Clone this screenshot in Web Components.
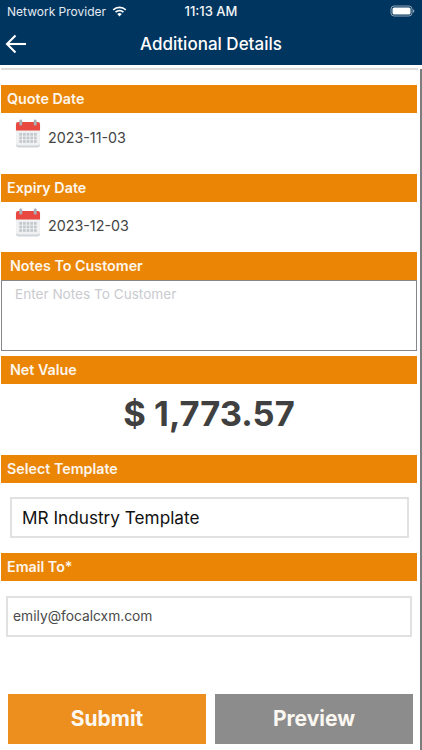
<!DOCTYPE html>
<html>
<head>
<meta charset="utf-8">
<style>
  html,body{margin:0;padding:0;background:#fff;}
  body{width:422px;height:750px;overflow:hidden;font-family:Inter,"Liberation Sans",sans-serif;position:relative;}
</style>
</head>
<body>
<details-page></details-page>

<script>
const calendarIcon = `
  <svg width="26" height="29" viewBox="0 0 27 30">
    <rect x="1" y="3" width="25" height="26.500" rx="2.500" fill="#cfd4d9"/>
    <rect x="1" y="3" width="25" height="24.500" rx="2.500" fill="#f0f1f3"/>
    <path d="M1 12V5.500A2.500 2.500 0 0 1 3.500 3h20A2.500 2.500 0 0 1 26 5.500V12z" fill="#e8483f"/>
    <rect x="4.500" y="0.500" width="3" height="6.500" rx="1.500" fill="#a9afb5"/>
    <rect x="19.500" y="0.500" width="3" height="6.500" rx="1.500" fill="#a9afb5"/>
    <g fill="#c3c8cd">
      ${[14.5,18.2,21.9].map(y => [4.5,8.3,12.1,15.9,19.7].map(x => `<rect x="${x}" y="${y}" width="2.800" height="2.800"/>`).join('')).join('')}
    </g>
  </svg>`;

class StatusBar extends HTMLElement {
  constructor() {
    super();
    this.attachShadow({ mode: 'open' }).innerHTML = `
      <style>
        :host{display:grid;grid-template-columns:1fr auto 1fr;align-items:center;height:22px;padding:0 7px;color:#e4ebf1;font-size:12px;}
        .left{display:flex;align-items:center;gap:6px;}
        .time{color:#f4f6f8;font-size:13px;font-weight:500;}
        .right{display:flex;justify-content:flex-end;}
        svg{display:block;}
      </style>
      <div class="left">
        <span>Network Provider</span>
        <svg width="15" height="11" viewBox="0 0 15 11" fill="#fff">
          <path d="M7.500 2.200c2.200 0 4.200.8 5.700 2.300l1.100-1.200A9.800 9.800 0 0 0 7.500.500 9.800 9.800 0 0 0 .7 3.300l1.100 1.200a8.100 8.100 0 0 1 5.700-2.300z"/>
          <path d="M7.500 5.400c1.300 0 2.500.5 3.400 1.300l1.100-1.200a6.600 6.600 0 0 0-9 0l1.100 1.200c.9-.8 2.100-1.300 3.400-1.300z"/>
          <path d="M7.500 10.500l2.300-2.500a3.300 3.300 0 0 0-4.600 0z"/>
        </svg>
      </div>
      <span class="time">11:13 AM</span>
      <div class="right">
        <svg width="25" height="12" viewBox="0 0 25 12">
          <rect x="1" y="1" width="21" height="10" rx="3" fill="none" stroke="#8fa3b5" stroke-width="1"/>
          <rect x="2.500" y="2.500" width="18" height="7" rx="1.500" fill="#fff"/>
          <rect x="23" y="4.500" width="1.200" height="3" rx=".6" fill="#8fa3b5"/>
        </svg>
      </div>`;
  }
}
customElements.define('status-bar', StatusBar);

class NavBar extends HTMLElement {
  constructor() {
    super();
    this.attachShadow({ mode: 'open' }).innerHTML = `
      <style>
        :host{display:block;background:#00355f;height:65px;box-sizing:border-box;}
        .row{display:grid;grid-template-columns:60px 1fr 60px;align-items:center;height:43px;}
        .title{text-align:center;color:#fff;font-size:17px;font-weight:500;}
        svg{display:block;margin-left:5px;}
      </style>
      <status-bar></status-bar>
      <div class="row">
        <svg width="22" height="20" viewBox="0 0 22 20" fill="none" stroke="#fff" stroke-width="2.100">
          <path d="M21 10H2"/>
          <path d="M10.500 1.500L2 10l8.500 8.500"/>
        </svg>
        <div class="title"><slot></slot></div>
        <span></span>
      </div>`;
  }
}
customElements.define('nav-bar', NavBar);

class SectionBar extends HTMLElement {
  constructor() {
    super();
    this.attachShadow({ mode: 'open' }).innerHTML = `
      <style>
        :host{display:flex;align-items:center;box-sizing:border-box;height:28px;width:416px;margin-left:1px;padding-left:var(--bar-pad,6px);background:#ea8505;color:#fdf6ec;font-size:14.300px;font-weight:600;}
      </style>
      <slot></slot>`;
  }
}
customElements.define('section-bar', SectionBar);

class DateRow extends HTMLElement {
  constructor() {
    super();
    this.attachShadow({ mode: 'open' }).innerHTML = `
      <style>
        :host{display:flex;align-items:flex-start;gap:7px;box-sizing:border-box;padding:6px 0 0 15px;height:46px;color:#444;font-size:14.300px;}
        svg{display:block;flex:none;}
        span{margin-top:var(--text-drop,10px);}
      </style>
      ${calendarIcon}
      <span><slot></slot></span>`;
  }
}
customElements.define('date-row', DateRow);

class TextBox extends HTMLElement {
  constructor() {
    super();
    this.attachShadow({ mode: 'open' }).innerHTML = `
      <style>
        :host{display:flex;align-items:center;box-sizing:border-box;height:41px;background:#fff;border:2px solid #e0e1e3;}
      </style>
      <slot></slot>`;
  }
}
customElements.define('text-box', TextBox);

class ActionButton extends HTMLElement {
  constructor() {
    super();
    this.attachShadow({ mode: 'open' }).innerHTML = `
      <style>
        :host{display:flex;align-items:center;justify-content:center;height:50px;background:var(--btn-bg,#ec8f1f);color:#fbf7f1;font-size:21px;font-weight:700;}
      </style>
      <slot></slot>`;
  }
}
customElements.define('action-button', ActionButton);

class DetailsPage extends HTMLElement {
  constructor() {
    super();
    this.attachShadow({ mode: 'open' }).innerHTML = `
      <style>
        :host{display:block;position:relative;width:422px;height:750px;overflow:hidden;}
        .rule{height:1.500px;background:#dcdee0;margin:3px 4px 0 1px;}
        .scrollbar{position:absolute;right:0;top:69px;bottom:0;width:2px;background:#7d7d7d;}
        .first{margin-top:15px;}
        .notes{box-sizing:border-box;width:416px;height:71px;margin-left:1px;background:#fff;border:1px solid #85878a;border-top-width:1.500px;padding:5px 13px;color:#c9cbcf;font-size:13.600px;}
        .value{height:71px;display:flex;align-items:center;justify-content:center;padding:0 4px 12px 0;box-sizing:border-box;color:#404040;font-size:34.500px;font-weight:700;}
        .template{width:399px;margin:14px 0 15px 10px;padding-left:10px;color:#111;font-size:17.200px;box-sizing:border-box;}
        .email{width:406px;margin:15px 0 0 6px;padding-left:5px;color:#4a4a4a;font-size:13.800px;box-sizing:border-box;}
        .actions{display:grid;grid-template-columns:198px 198px;gap:9px;margin:57px 0 0 8px;}
        .preview{--btn-bg:#8c8c8c;}
        .tight{--bar-pad:9px;}
      </style>
      <nav-bar>Additional Details</nav-bar>
      <div class="rule"></div>
      <section-bar class="first">Quote Date</section-bar>
      <date-row>2023-11-03</date-row>
      <section-bar style="margin-top:15px">Expiry Date</section-bar>
      <date-row style="height:50px;--text-drop:9px">2023-12-03</date-row>
      <section-bar class="tight">Notes To Customer</section-bar>
      <div class="notes">Enter Notes To Customer</div>
      <section-bar class="tight" style="margin-top:5px">Net Value</section-bar>
      <div class="value">$ 1,773.57</div>
      <section-bar>Select Template</section-bar>
      <text-box class="template">MR Industry Template</text-box>
      <section-bar>Email To*</section-bar>
      <text-box class="email">emily@focalcxm.com</text-box>
      <div class="actions">
        <action-button>Submit</action-button>
        <action-button class="preview">Preview</action-button>
      </div>
      <div class="scrollbar"></div>`;
  }
}
customElements.define('details-page', DetailsPage);
</script>
</body>
</html>
